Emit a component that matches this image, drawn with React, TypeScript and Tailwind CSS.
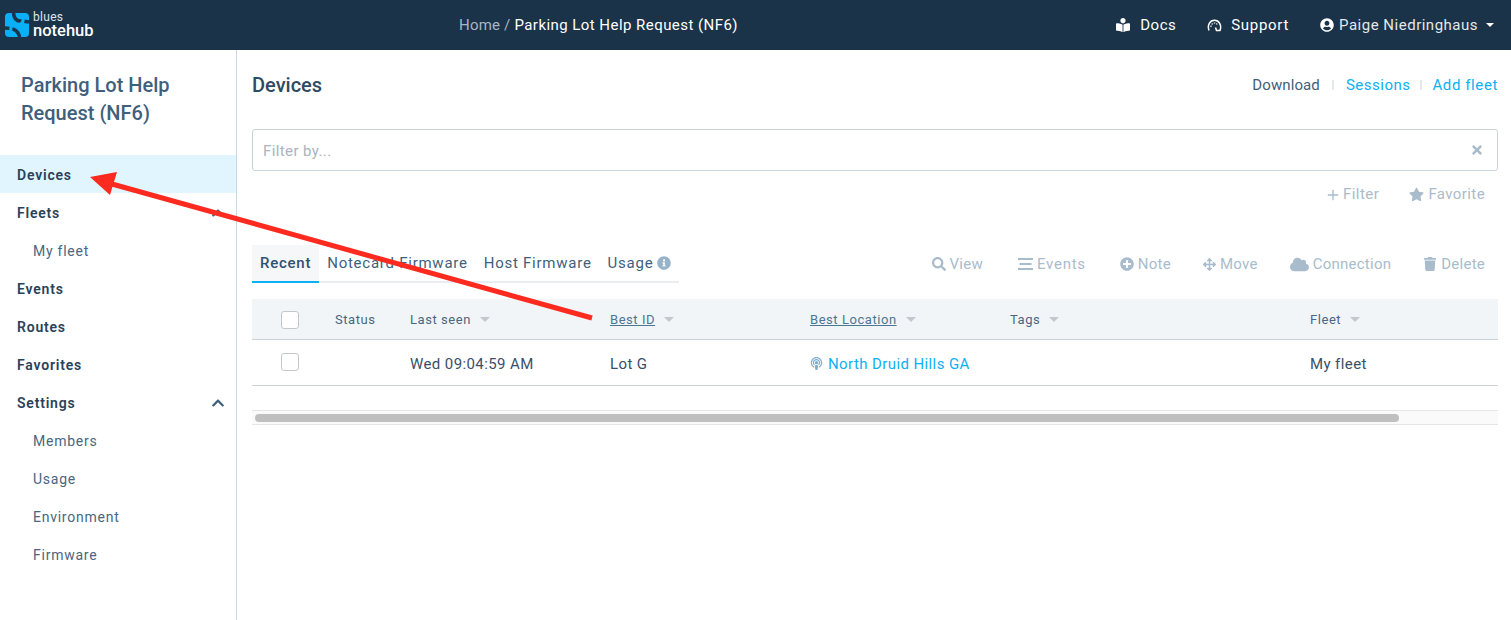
import React from 'react';
import { Plus } from 'lucide-react';
import {
  FaArrowsAlt,
  FaBookReader,
  FaChevronUp,
  FaCloud,
  FaInfoCircle,
  FaPlusCircle,
  FaPodcast,
  FaSearch,
  FaStar,
  FaTimes,
  FaTrash,
  FaUserCircle,
} from 'react-icons/fa';

const font = { fontFamily: 'Roboto, sans-serif' };

const Logo = () => (
  <svg width="26" height="26" viewBox="0 0 26 26" className="shrink-0">
    <rect x="1" y="1" width="24" height="24" rx="4" fill="#0ab0f5" />
    <path d="M9.5 1 C10 6 12 9 16 9 C19 9 22 9.5 25 10" fill="none" stroke="#1a3349" strokeWidth="3.6" />
    <path d="M1 16 C4 16 7 16.5 10 17.5 C13 19 15 22 15.5 25" fill="none" stroke="#1a3349" strokeWidth="3.6" />
    <path d="M19 7 C20 12 14 14 12 13 C8 12 6 15 7 19" fill="none" stroke="#0ab0f5" strokeWidth="3" />
  </svg>
);

const GaugeIcon = () => (
  <svg width="15" height="13" viewBox="0 0 15 13" fill="none" stroke="#fff" strokeWidth="1.5">
    <path d="M2 11.5 C0 6 3 1.2 7.5 1.2 C12 1.2 15 6 13 11.5 L9.5 11.5 L8.5 8.5" />
    <path d="M5 4.5 L5.5 5.5 M7.5 3.5 V4.5 M10 4.5 L9.5 5.5 M3.5 7 L4.5 7.5" />
  </svg>
);

const Caret = () => (
  <span className="inline-block w-0 h-0 border-x-[5px] border-x-transparent border-t-[5px] border-t-[#c3c8ce]" />
);

const SideLink = ({ label, active, sub }: { label: string; active?: boolean; sub?: boolean }) => (
  <div
    className={`h-[38px] pt-[2px] flex items-center text-[14px] ${sub ? 'pl-[33px] text-[#4a6680] tracking-[0.75px]' : 'pl-[17px] font-semibold text-[#2a4259] tracking-[0.8px]'} ${active ? 'bg-[#e0f5fd] text-[#1a3349]' : ''}`}
  >
    {label}
  </div>
);

const ActionButton = ({ icon, label, className }: { icon: React.ReactNode; label: string; className?: string }) => (
  <span className={`flex items-center gap-[4px] text-[#a9bccb] text-[15px] tracking-[0.25px] ${className ?? ''}`}>
    {icon}
    {label}
  </span>
);

const Checkbox = () => <span className="block w-[18px] h-[18px] rounded-[3px] border border-[#c4c8cc] bg-white" />;

const App = () => {
  return (
    <div className="relative w-[1511px] h-[620px] overflow-hidden bg-white flex flex-col" style={font}>
      <header className="h-[50px] shrink-0 bg-[#1a3349] flex items-center text-white">
        <div className="w-[459px] pl-[4px] flex items-center gap-[3px]">
          <Logo />
          <div className="flex flex-col">
            <span className="text-[12px] leading-[12px] text-[#dfe6ec] tracking-[0.3px]">blues</span>
            <span className="text-[16.5px] leading-[16px] font-medium">notehub</span>
          </div>
        </div>
        <div className="text-[15px] tracking-[0.45px]">
          <span className="text-[#a9b6c2] tracking-[0.2px]">Home / </span>
          <span>Parking Lot Help Request (NF6)</span>
        </div>
        <div className="ml-auto flex items-center text-[15px] pr-[17px]">
          <span className="flex items-center gap-[10px] tracking-[0.5px]"><FaBookReader size={14} />Docs</span>
          <span className="flex items-center gap-[9px] ml-[31px] tracking-[0.7px]"><GaugeIcon />Support</span>
          <span className="flex items-center gap-[5px] ml-[31px] text-[#e3e8ec] tracking-[0.5px]">
            <FaUserCircle size={14} className="text-white" />
            Paige Niedringhaus
            <span className="ml-[3px] w-0 h-0 border-x-[4px] border-x-transparent border-t-[4px] border-t-white" />
          </span>
        </div>
      </header>

      <div className="flex flex-1 min-h-0">
        <aside className="w-[237px] shrink-0 border-r border-[#c9d8e3]">
          <div className="pt-[21px] pl-[21px] pr-[40px] h-[105px] text-[20px] leading-[28px] font-medium text-[#3f607c]">
            Parking Lot Help Request (NF6)
          </div>
          <SideLink label="Devices" active />
          <div className="relative">
            <SideLink label="Fleets" />
            <FaChevronUp size={14} className="absolute right-[11px] top-[13px] text-[#3f607c]" />
          </div>
          <SideLink label="My fleet" sub />
          <SideLink label="Events" />
          <SideLink label="Routes" />
          <SideLink label="Favorites" />
          <div className="relative">
            <SideLink label="Settings" />
            <FaChevronUp size={14} className="absolute right-[11px] top-[13px] text-[#3f607c]" />
          </div>
          <SideLink label="Members" sub />
          <SideLink label="Usage" sub />
          <SideLink label="Environment" sub />
          <SideLink label="Firmware" sub />
        </aside>

        <main className="flex-1 min-w-0 pl-[15px] pr-[13px]">
          <div className="h-[79px] flex items-center justify-between pb-[9px]">
            <h1 className="text-[20px] font-medium text-[#2f4a62]">Devices</h1>
            <div className="flex items-center text-[15px]">
              <span className="text-[#3f5f7a] tracking-[0.1px]">Download</span>
              <span className="w-[2px] h-[10px] bg-[#e6eaee] mx-[12px]" />
              <span className="text-[#0cb0f5] tracking-[0.5px]">Sessions</span>
              <span className="w-[2px] h-[10px] bg-[#e6eaee] mx-[10px]" />
              <span className="text-[#0cb0f5] tracking-[0.6px]">Add fleet</span>
            </div>
          </div>

          <div className="h-[42px] pt-[2px] border border-[#c9d3dc] rounded-[3px] flex items-center justify-between pl-[10px] pr-[13px] text-[15px] text-[#a9b4be] tracking-[0.4px]">
            <span>Filter by...</span>
            <FaTimes size={14} className="text-[#a9bccb] -mt-[2px]" />
          </div>

          <div className="h-[46px] flex items-center justify-end gap-[30px] pr-[13px] pt-[1px]">
            <span className="flex items-center gap-[2px] text-[#a9bccb] text-[15px] tracking-[0.5px]">
              <Plus size={16} strokeWidth={2} />
              Filter
            </span>
            <span className="flex items-center gap-[4px] text-[#a9bccb] text-[15px] tracking-[0.4px]">
              <FaStar size={15} />
              Favorite
            </span>
          </div>

          <div className="mt-[28px] h-[38px] flex items-end justify-between">
            <div className="flex items-end h-[38px] border-b-2 border-[#e9edf1] text-[15px] text-[#3f5f7a] pr-[8px] tracking-[0.75px]">
              <span className="h-[38px] -mb-[2px] px-[8px] flex items-center bg-[#f6f7f8] border-b-2 border-[#0cb0f5] text-[#2f5270] font-medium">Recent</span>
              <span className="h-[36px] pl-[8px] flex items-center">Notecard Firmware</span>
              <span className="h-[36px] pl-[16px] flex items-center">Host Firmware</span>
              <span className="h-[36px] pl-[16px] flex items-center gap-[4px]">
                Usage
                <FaInfoCircle size={14} className="text-[#96b3ca]" />
              </span>
            </div>
            <div className="h-[38px] flex items-center gap-[32px] pr-[13px]">
              <ActionButton icon={<FaSearch size={14} />} label="View" className="mr-[3px]" />
              <ActionButton
                icon={
                  <svg width="15" height="12" viewBox="0 0 15 12" fill="currentColor">
                    <rect y="0" width="15" height="2" />
                    <rect x="1.5" y="5" width="12" height="2" />
                    <rect y="10" width="15" height="2" />
                  </svg>
                }
                label="Events"
                className="tracking-[0.75px] mr-[2px]"
              />
              <ActionButton icon={<FaPlusCircle size={14} />} label="Note" />
              <ActionButton icon={<FaArrowsAlt size={13} />} label="Move" />
              <ActionButton icon={<FaCloud size={19} />} label="Connection" />
              <ActionButton icon={<FaTrash size={14} />} label="Delete" />
            </div>
          </div>

          <div className="mt-[16px] w-full">
            <div className="h-[41px] pt-[1px] bg-[#f2f5f8] border-b border-[#c9d3dc] grid grid-cols-[83px_75px_200px_200px_200px_300px_1fr] items-center text-[13px] text-[#4a6680] tracking-[0.55px]">
              <span className="pl-[29px]"><Checkbox /></span>
              <span>Status</span>
              <span className="flex items-center gap-[9px]">Last seen <Caret /></span>
              <span className="flex items-center gap-[9px]"><span className="underline text-[#4d7694]">Best ID</span> <Caret /></span>
              <span className="flex items-center gap-[9px]"><span className="underline text-[#4d7694]">Best Location</span> <Caret /></span>
              <span className="flex items-center gap-[9px]">Tags <Caret /></span>
              <span className="flex items-center gap-[9px]">Fleet <Caret /></span>
            </div>
            <div className="h-[46px] pt-[4px] border-b border-[#c9d3dc] grid grid-cols-[83px_75px_200px_200px_200px_300px_1fr] items-center text-[15px] text-[#3a5068] tracking-[0.4px]">
              <span className="pl-[29px] -mt-[6px]"><Checkbox /></span>
              <span />
              <span>Wed 09:04:59 AM</span>
              <span>Lot G</span>
              <span className="flex items-center gap-[5px] text-[#0cb0f5]">
                <FaPodcast size={13} className="text-[#7fb0d0] -mt-[3px]" />
                North Druid Hills GA
              </span>
              <span />
              <span>My fleet</span>
            </div>
          </div>

          <div className="mt-[24px] h-[15px] border-y border-[#e6e6e6] bg-[#fafafa] flex items-center px-[3px]">
            <div className="w-[1144px] h-[8px] rounded-full bg-[#bfbfbf]" />
          </div>
        </main>
      </div>

      {/* annotation arrow over the page */}
      <svg className="absolute inset-0 pointer-events-none" width="1511" height="620" viewBox="0 0 1511 620">
        <line x1="592" y1="318" x2="112" y2="184" stroke="#fc2a1f" strokeWidth="5" />
        <polygon points="90,177 117,172 110,195" fill="#fc2a1f" />
      </svg>
    </div>
  );
};

export default App;
